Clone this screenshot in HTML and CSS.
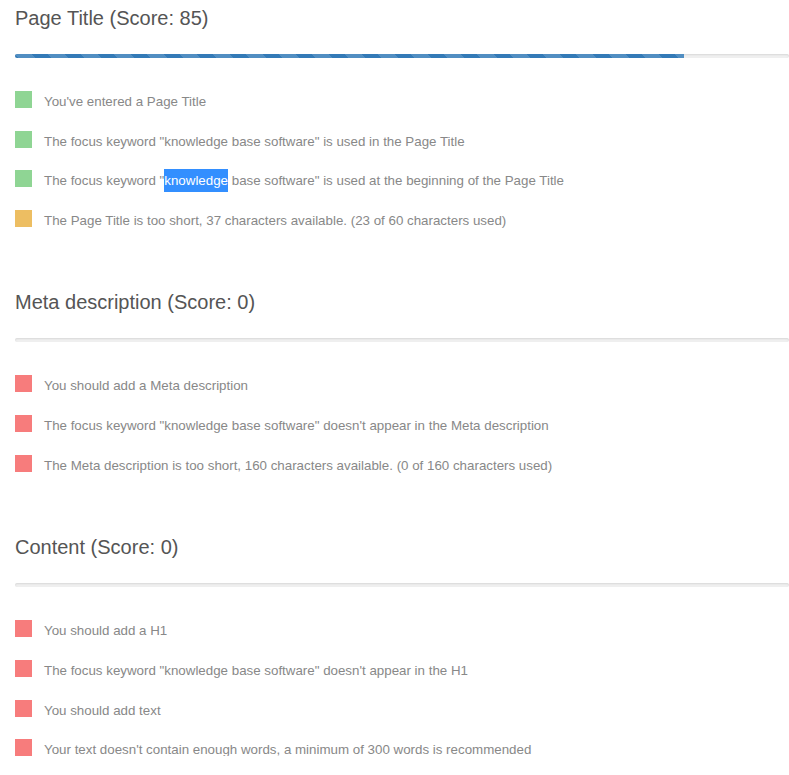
FILE: index.html
```html
<!DOCTYPE html>
<html>
<head>
<meta charset="utf-8">
<link rel="stylesheet" href="styles.css">
</head>
<body>
<div class="page">
  <section class="section">
    <h2 class="title">Page Title (Score: 85)</h2>
    <div class="progress"><div class="progress-fill" style="width: 669px"></div></div>
    <ul class="checks">
      <li class="check"><span class="box good"></span><span class="label">You've entered a Page Title</span></li>
      <li class="check"><span class="box good"></span><span class="label">The focus keyword "knowledge base software" is used in the Page Title</span></li>
      <li class="check"><span class="box good"></span><span class="label">The focus keyword "<span class="sel">knowledge</span> base software" is used at the beginning of the Page Title</span></li>
      <li class="check"><span class="box ok"></span><span class="label">The Page Title is too short, 37 characters available. (23 of 60 characters used)</span></li>
    </ul>
  </section>
  <section class="section">
    <h2 class="title">Meta description (Score: 0)</h2>
    <div class="progress"></div>
    <ul class="checks">
      <li class="check"><span class="box bad"></span><span class="label">You should add a Meta description</span></li>
      <li class="check"><span class="box bad"></span><span class="label">The focus keyword "knowledge base software" doesn't appear in the Meta description</span></li>
      <li class="check"><span class="box bad"></span><span class="label">The Meta description is too short, 160 characters available. (0 of 160 characters used)</span></li>
    </ul>
  </section>
  <section class="section">
    <h2 class="title">Content (Score: 0)</h2>
    <div class="progress"></div>
    <ul class="checks">
      <li class="check"><span class="box bad"></span><span class="label">You should add a H1</span></li>
      <li class="check"><span class="box bad"></span><span class="label">The focus keyword "knowledge base software" doesn't appear in the H1</span></li>
      <li class="check"><span class="box bad"></span><span class="label">You should add text</span></li>
      <li class="check"><span class="box bad"></span><span class="label">Your text doesn't contain enough words, a minimum of 300 words is recommended</span></li>
    </ul>
  </section>
</div>
</body>
</html>
```

FILE: styles.css
```css
html, body {
  margin: 0;
  padding: 0;
  background: #fff;
  overflow: hidden;
}
.page {
  padding: 6px 0 0 15px;
  font-family: "Liberation Sans", Arial, sans-serif;
}
.section + .section {
  margin-top: 63.5px;
}
.title {
  margin: 0;
  font-size: 20px;
  line-height: 24px;
  font-weight: normal;
  color: #555;
}
.progress {
  margin-top: 24px;
  height: 4px;
  border-radius: 2px;
  background: #f0f0f0;
  box-shadow: inset 0 1px 2px rgba(0, 0, 0, 0.1);
  overflow: hidden;
}
.progress-fill {
  height: 100%;
  background-color: #337ab7;
  background-image: linear-gradient(45deg, rgba(255,255,255,.15) 25%, transparent 25%, transparent 50%, rgba(255,255,255,.15) 50%, rgba(255,255,255,.15) 75%, transparent 75%, transparent);
  background-size: 33px 33px;
}
.checks {
  list-style: none;
  margin: 33px 0 0;
  padding: 0;
  display: flex;
  flex-direction: column;
  gap: calc(119px / 3 - 17px);
}
.check {
  display: flex;
  align-items: center;
  height: 17px;
}
.box {
  width: 17px;
  height: 17px;
  flex: none;
}
.good { background: #8fd594; }
.ok { background: #edbe62; }
.bad { background: #f77c7c; }
.label {
  margin-left: 12px;
  font-size: 13.33px;
  line-height: 17px;
  color: #888;
  position: relative;
  top: 2px;
  white-space: nowrap;
}
.sel {
  background: #338fff;
  color: #fff;
  display: inline-block;
  line-height: 23px;
}
```
